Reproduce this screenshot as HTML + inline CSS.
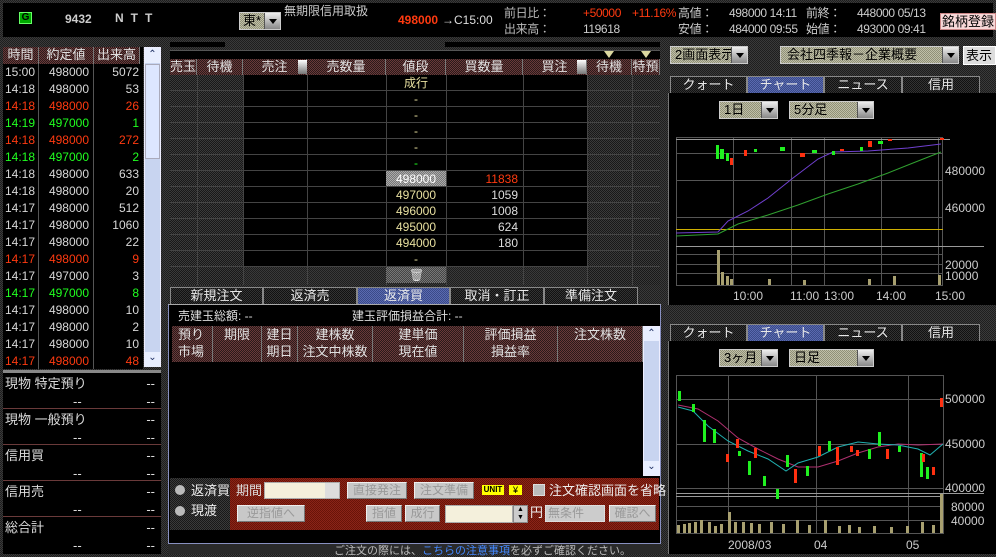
<!DOCTYPE html>
<html><head><meta charset="utf-8"><style>
*{margin:0;padding:0;box-sizing:border-box}
body{width:996px;height:554px;overflow:hidden;background:#2b2b2b;background-image:repeating-conic-gradient(#3a3a3a 0 25%,#1e1e1e 0 50%);background-size:2px 2px;font-family:"Liberation Sans","Noto Sans CJK JP",sans-serif;font-size:12px;color:#d8d8d8;position:relative}
.a{position:absolute}
.blk{position:absolute;background:#000}
.hd{position:absolute;background:#4a2c2c;background-image:repeating-conic-gradient(#6a3a3a 0 25%,#2a1a1a 0 50%);background-size:2px 2px;color:#e0e0e0;text-align:center;font-size:13px;border-right:1px solid #777}
.t{position:absolute;white-space:nowrap;line-height:1}
.r{color:#ff3a10}.g{color:#20ff20}.y{color:#e8e0a0}
.tab{position:absolute;height:17px;border:1px solid #888;border-bottom:none;text-align:center;font-size:13px;line-height:16px;color:#e8e8e8;background:#1a1a1a;background-image:repeating-conic-gradient(#333 0 25%,#111 0 50%);background-size:2px 2px}
.tab.on{background:#4a5a9a;background-image:repeating-conic-gradient(#5a6ab0 0 25%,#3a4a88 0 50%);background-size:2px 2px}
.dd{position:absolute;height:18px;background:#a8a890;background-image:repeating-conic-gradient(#c0c0a8 0 25%,#909078 0 50%);background-size:2px 2px;border:1px solid #ccc;color:#000;font-size:13px;line-height:16px;padding-left:4px}
.dd i{position:absolute;right:0;top:0;width:16px;height:16px;background:linear-gradient(#eee,#888);border-left:1px solid #555}
.dd i:after{content:"";position:absolute;left:4px;top:6px;border:4px solid transparent;border-top:5px solid #000}
.btn{position:absolute;height:17px;background:#c8c8c8;border:1px solid #eee;border-right-color:#777;border-bottom-color:#777;color:#999;font-size:12px;text-align:center;line-height:15px}
.tex{background-image:repeating-conic-gradient(#3a3a3a 0 25%,#181818 0 50%);background-size:2px 2px}
.tp{letter-spacing:-0.4px}
</style></head><body>

<div class="blk" style="left:3px;top:3px;width:990px;height:34px"></div>
<div class="a" style="left:19px;top:12px;width:13px;height:12px;background:#0a0;border:1px solid #6f6;color:#000;font-size:10px;text-align:center;line-height:10px;font-weight:bold">G</div>
<div class="t" style="left:65px;top:13px;font-weight:bold;color:#ccc">9432</div>
<div class="t" style="left:115px;top:12px;font-weight:bold;color:#ccc;letter-spacing:7px">NTT</div>
<div class="dd" style="left:239px;top:12px;width:42px;padding-left:3px">東*<i></i></div>
<div class="t" style="left:284px;top:5px;color:#ccc">無期限信用取扱</div>
<div class="t r" style="left:398px;top:14px;font-weight:bold">498000</div>
<div class="t" style="left:442px;top:14px;color:#ddd">→C15:00</div>
<div class="t tp" style="left:504px;top:7px;color:#bbb">前日比：</div>
<div class="t r tp" style="left:583px;top:7px">+50000</div>
<div class="t r tp" style="left:632px;top:7px">+11.16%</div>
<div class="t tp" style="left:678px;top:7px;color:#ccc">高値：</div>
<div class="t tp" style="left:729px;top:7px;color:#ccc">498000 14:11</div>
<div class="t tp" style="left:806px;top:7px;color:#ccc">前終：</div>
<div class="t tp" style="left:857px;top:7px;color:#ccc">448000 05/13</div>
<div class="t tp" style="left:504px;top:23px;color:#bbb">出来高：</div>
<div class="t tp" style="left:583px;top:23px;color:#ccc">119618</div>
<div class="t tp" style="left:678px;top:23px;color:#ccc">安値：</div>
<div class="t tp" style="left:729px;top:23px;color:#ccc">484000 09:55</div>
<div class="t tp" style="left:806px;top:23px;color:#ccc">始値：</div>
<div class="t tp" style="left:857px;top:23px;color:#ccc">493000 09:41</div>
<div class="a" style="left:940px;top:13px;width:56px;height:17px;background:#f8d8d8;border:1px solid #c88;color:#000;font-size:13px;line-height:15px;text-align:center">銘柄登録</div>

<div class="blk" style="left:3px;top:47px;width:140px;height:322px"></div>
<div class="hd" style="left:3px;top:47px;width:36px;height:17px;line-height:16px">時間</div>
<div class="hd" style="left:39px;top:47px;width:55px;height:17px;line-height:16px">約定値</div>
<div class="hd" style="left:94px;top:47px;width:46px;height:17px;line-height:16px">出来高</div>
<div class="a" style="left:38px;top:64px;width:1px;height:305px;background:#555"></div>
<div class="a" style="left:93px;top:64px;width:1px;height:305px;background:#555"></div>
<div class="a" style="left:144px;top:47px;width:17px;height:320px;background:#c8d4f0;border:1px solid #eef"></div>
<div class="a" style="left:145px;top:48px;width:15px;height:15px;background:#e8eeff;color:#236;font-size:10px;text-align:center;line-height:14px">⌃</div>
<div class="a" style="left:145px;top:64px;width:15px;height:95px;background:#dde6ff;border:1px solid #aab"></div>
<div class="a" style="left:145px;top:352px;width:15px;height:15px;background:#e8eeff;color:#236;font-size:10px;text-align:center;line-height:12px">⌄</div>
<div class="a" style="left:3px;top:64px;width:138px;font-size:12px;line-height:17px">
<div style="position:relative;height:306px">
<pre style="font-family:inherit;position:absolute;left:2px;top:0">15:00
14:18
<span class="r">14:18</span>
<span class="g">14:19</span>
<span class="r">14:18</span>
<span class="g">14:18</span>
14:18
14:18
14:17
14:17
14:17
<span class="r">14:17</span>
14:17
<span class="g">14:17</span>
14:17
14:17
14:17
<span class="r">14:17</span></pre>
<pre style="font-family:inherit;position:absolute;right:52px;top:0;text-align:right">498000
498000
<span class="r">498000</span>
<span class="g">497000</span>
<span class="r">498000</span>
<span class="g">497000</span>
498000
498000
498000
498000
498000
<span class="r">498000</span>
497000
<span class="g">497000</span>
498000
498000
498000
<span class="r">498000</span></pre>
<pre style="font-family:inherit;position:absolute;right:2px;top:0;text-align:right">5072
53
<span class="r">26</span>
<span class="g">1</span>
<span class="r">272</span>
<span class="g">2</span>
633
20
512
1060
22
<span class="r">9</span>
3
<span class="g">8</span>
10
2
10
<span class="r">48</span></pre>
</div></div>

<div class="blk" style="left:3px;top:371px;width:158px;height:183px"></div>
<div class="a" style="left:3px;top:370px;width:158px;height:3px;background:#888"></div>
<div class="a" style="left:3px;top:373px;width:158px;font-size:13px;color:#ddd">
<div style="height:36px;border-bottom:1px solid #6a3a3a;position:relative"><span class="t" style="left:2px;top:4px">現物 特定預り</span><span class="t" style="right:6px;top:4px">--</span><span class="t" style="left:70px;top:22px">--</span><span class="t" style="right:6px;top:22px">--</span></div>
<div style="height:36px;border-bottom:1px solid #6a3a3a;position:relative"><span class="t" style="left:2px;top:4px">現物 一般預り</span><span class="t" style="right:6px;top:4px">--</span><span class="t" style="left:70px;top:22px">--</span><span class="t" style="right:6px;top:22px">--</span></div>
<div style="height:36px;border-bottom:1px solid #6a3a3a;position:relative"><span class="t" style="left:2px;top:4px">信用買</span><span class="t" style="right:6px;top:4px">--</span><span class="t" style="left:70px;top:22px">--</span><span class="t" style="right:6px;top:22px">--</span></div>
<div style="height:36px;border-bottom:1px solid #6a3a3a;position:relative"><span class="t" style="left:2px;top:4px">信用売</span><span class="t" style="right:6px;top:4px">--</span><span class="t" style="left:70px;top:22px">--</span><span class="t" style="right:6px;top:22px">--</span></div>
<div style="height:36px;position:relative"><span class="t" style="left:2px;top:4px">総合計</span><span class="t" style="right:6px;top:4px">--</span><span class="t" style="left:70px;top:22px">--</span><span class="t" style="right:6px;top:22px">--</span></div>
</div>

<div class="blk" style="left:170px;top:42px;width:55px;height:5px"></div>
<div class="blk" style="left:445px;top:42px;width:215px;height:5px"></div>
<div class="blk" style="left:170px;top:50px;width:490px;height:9px;border-top:1px solid #555"></div>
<div class="hd" style="left:170px;top:59px;width:27px;height:16px;line-height:15px">売玉</div>
<div class="hd" style="left:197px;top:59px;width:46px;height:16px;line-height:15px">待機</div>
<div class="hd" style="left:243px;top:59px;width:64px;height:16px;line-height:15px">売注</div>
<div class="a" style="left:298px;top:60px;width:9px;height:14px;background:linear-gradient(#fff,#777)"></div>
<div class="hd" style="left:307px;top:59px;width:79px;height:16px;line-height:15px">売数量</div>
<div class="hd" style="left:386px;top:59px;width:60px;height:16px;line-height:15px">値段</div>
<div class="hd" style="left:446px;top:59px;width:77px;height:16px;line-height:15px">買数量</div>
<div class="hd" style="left:523px;top:59px;width:64px;height:16px;line-height:15px">買注</div>
<div class="a" style="left:577px;top:60px;width:9px;height:14px;background:linear-gradient(#fff,#777)"></div>
<div class="hd" style="left:587px;top:59px;width:45px;height:16px;line-height:15px">待機</div>
<div class="hd" style="left:632px;top:59px;width:28px;height:16px;line-height:15px">特預</div>
<div class="a" style="left:604px;top:51px;border:5px solid transparent;border-top:7px solid #dcd8a0"></div>
<div class="a" style="left:641px;top:51px;border:5px solid transparent;border-top:7px solid #dcd8a0"></div>
<div class="a tex" style="left:170px;top:75px;width:73px;height:210px"></div>
<div class="a tex" style="left:587px;top:75px;width:73px;height:210px"></div>
<div class="blk" style="left:243px;top:75px;width:344px;height:192px"></div>
<svg class="a" style="left:170px;top:75px" width="490" height="210">
<g stroke="#444" stroke-width="1">
<path d="M0 15.5H490M0 31.5H490M0 47.5H490M0 63.5H490M0 79.5H490M0 95.5H490M0 111.5H490M0 127.5H490M0 143.5H490M0 159.5H490M0 175.5H490M0 191.5H490"/>
<path d="M73.5 0V210M137.5 0V210M216.5 0V210M276.5 0V210M353.5 0V210M417.5 0V210M462.5 0V210M27.5 0V210"/>
</g></svg>
<div class="a" style="left:386px;top:171px;width:60px;height:15px;background:#888;background-image:repeating-conic-gradient(#aaa 0 25%,#777 0 50%);background-size:2px 2px"></div>
<div class="a tex" style="left:386px;top:267px;width:60px;height:16px;background-image:repeating-conic-gradient(#777 0 25%,#444 0 50%)"></div>
<div class="t" style="left:409px;top:269px;color:#ddd">🗑</div>
<div class="a y" style="left:386px;top:75px;width:60px;text-align:center;line-height:16px;font-size:12px">成行<br>-<br>-<br>-<br>-<br><span class="g">-</span><br><span style="color:#fff">498000</span><br>497000<br>496000<br>495000<br>494000<br>-</div>
<div class="a" style="left:446px;top:171px;width:72px;text-align:right;line-height:16px;color:#ddd"><span class="r">11838</span><br>1059<br>1008<br>624<br>180</div>

<div class="tab" style="left:170px;top:287px;width:93px">新規注文</div>
<div class="tab" style="left:263px;top:287px;width:94px">返済売</div>
<div class="tab on" style="left:357px;top:287px;width:93px">返済買</div>
<div class="tab" style="left:450px;top:287px;width:94px">取消・訂正</div>
<div class="tab" style="left:544px;top:287px;width:94px">準備注文</div>
<div class="blk" style="left:168px;top:304px;width:493px;height:248px;border:1px solid #8890c0;border-top:1px solid #aaa"></div>
<div class="t" style="left:178px;top:310px;color:#ddd">売建玉総額: --</div>
<div class="t" style="left:352px;top:310px;color:#ddd">建玉評価損益合計: --</div>
<div class="hd" style="left:172px;top:326px;width:41px;height:36px;line-height:17px;text-align:left;padding-left:6px">預り<br>市場</div>
<div class="hd" style="left:213px;top:326px;width:49px;height:36px;line-height:17px">期限</div>
<div class="hd" style="left:262px;top:326px;width:36px;height:36px;line-height:17px">建日<br>期日</div>
<div class="hd" style="left:298px;top:326px;width:75px;height:36px;line-height:17px">建株数<br>注文中株数</div>
<div class="hd" style="left:373px;top:326px;width:91px;height:36px;line-height:17px">建単価<br>現在値</div>
<div class="hd" style="left:464px;top:326px;width:94px;height:36px;line-height:17px">評価損益<br>損益率</div>
<div class="hd" style="left:558px;top:326px;width:85px;height:36px;line-height:17px">注文株数</div>
<div class="a" style="left:643px;top:326px;width:17px;height:150px;background:#c8d4f0;border:1px solid #eef"></div>
<div class="a" style="left:644px;top:327px;width:15px;height:14px;background:#e8eeff;color:#236;font-size:10px;text-align:center;line-height:14px">⌃</div>
<div class="a" style="left:644px;top:461px;width:15px;height:14px;background:#e8eeff;color:#236;font-size:10px;text-align:center;line-height:12px">⌄</div>
<div class="a tex" style="left:170px;top:478px;width:60px;height:52px"></div>
<div class="a" style="left:230px;top:478px;width:429px;height:52px;background:#7a1a10;background-image:repeating-conic-gradient(#8a2418 0 25%,#681408 0 50%);background-size:2px 2px"></div>
<div class="a" style="left:175px;top:485px;width:10px;height:10px;border-radius:50%;background:#bbb"></div>
<div class="a" style="left:175px;top:506px;width:10px;height:10px;border-radius:50%;background:#bbb"></div>
<div class="t" style="left:191px;top:484px;font-size:13px;color:#eee">返済買</div>
<div class="t" style="left:191px;top:504px;font-size:13px;color:#eee">現渡</div>
<div class="t" style="left:236px;top:484px;font-size:13px;color:#ddd">期間</div>
<div class="a" style="left:264px;top:482px;width:76px;height:17px;background:#f4f0dc;border:1px solid #aaa"></div>
<div class="a" style="left:325px;top:483px;width:14px;height:15px;background:#ddd"></div>
<div class="btn" style="left:347px;top:482px;width:60px">直接発注</div>
<div class="btn" style="left:414px;top:482px;width:60px">注文準備</div>
<div class="a" style="left:482px;top:485px;width:22px;height:10px;background:#ff0;color:#000;font-size:8px;font-weight:bold;text-align:center;line-height:10px">UNIT</div>
<div class="a" style="left:509px;top:485px;width:13px;height:10px;background:#ff0;color:#000;font-size:9px;text-align:center;line-height:10px">¥</div>
<div class="a" style="left:533px;top:484px;width:12px;height:12px;background:#bbb;border:1px solid #ddd"></div>
<div class="t" style="left:549px;top:484px;font-size:13px;color:#eee">注文確認画面を省略</div>
<div class="btn" style="left:237px;top:505px;width:68px">逆指値へ</div>
<div class="btn" style="left:366px;top:505px;width:36px">指値</div>
<div class="btn" style="left:405px;top:505px;width:35px">成行</div>
<div class="a" style="left:445px;top:505px;width:68px;height:18px;background:#f4f0dc;border:1px solid #aaa"></div>
<div class="a" style="left:513px;top:505px;width:15px;height:18px;background:#ccc;border:1px solid #888;font-size:7px;color:#000;text-align:center;line-height:8px">▲<br>▼</div>
<div class="t" style="left:530px;top:506px;font-size:13px;color:#eee">円</div>
<div class="a" style="left:545px;top:505px;width:60px;height:17px;background:#ccc;border:1px solid #ddd;color:#999;font-size:12px;padding-left:2px;line-height:15px">無条件</div>
<div class="btn" style="left:609px;top:505px;width:47px">確認へ</div>
<div class="a" style="left:168px;top:543px;width:493px;height:11px;background:#2a2a2a;border-top:1px solid #8890c0"></div>
<div class="t" style="left:334px;top:546px;font-size:11px;color:#bbb">ご注文の際には、<span style="color:#48f">こちらの注意事項</span>を必ずご確認ください。</div>

<div class="dd" style="left:670px;top:46px;width:78px">2画面表示<i></i></div>
<div class="dd" style="left:780px;top:46px;width:179px;padding-left:6px">会社四季報－企業概要<i></i></div>
<div class="a" style="left:963px;top:46px;width:33px;height:19px;background:#ddd;border:1px solid #fff;color:#000;font-size:13px;line-height:17px;padding-left:2px">表示</div>

<div class="tab" style="left:670px;top:76px;width:77px">クォート</div>
<div class="tab on" style="left:747px;top:76px;width:77px">チャート</div>
<div class="tab" style="left:824px;top:76px;width:78px">ニュース</div>
<div class="tab" style="left:902px;top:76px;width:78px">信用</div>
<div class="blk" style="left:668px;top:93px;width:328px;height:212px;border-left:1px solid #777"></div>
<div class="dd" style="left:719px;top:101px;width:59px">1日<i></i></div>
<div class="dd" style="left:789px;top:101px;width:85px">5分足<i></i></div>
<svg class="a" style="left:668px;top:93px" width="328" height="212" font-family="Liberation Sans" font-size="12" fill="#ccc">
<g stroke="#555" fill="none"><rect x="8.5" y="44.5" width="266" height="148"/>
<path d="M8 87.5H275M8 124.5H275M8 161.5H275M8 171.5H275M8 180.5H275M8 60.5H275"/>
<path d="M65.5 44V192M123.5 44V192M156.5 44V192M213.5 44V192M270.5 44V192"/>
<path d="M8 153.5H316" stroke="#999"/></g>
<path d="M8 46.5H282" stroke="#999"/>
<path d="M8 136.5H275" stroke="#d0b000"/>
<path d="M8 140 L50 139 L60 128 L80 118 L100 105 L125 85 L150 66 L165 59 L200 58 L240 55 L273 51" stroke="#7040d0" fill="none"/>
<path d="M8 143 L50 141 L70 131 L100 122 L130 112 L160 101 L190 91 L220 80 L245 70 L273 59" stroke="#30a030" fill="none"/>
<g fill="#20f020"><rect x="48" y="52" width="3" height="14"/><rect x="52" y="56" width="4" height="10"/><rect x="58" y="60" width="3" height="8"/><rect x="86" y="56" width="3" height="3"/><rect x="112" y="54" width="5" height="4"/><rect x="144" y="57" width="5" height="3"/><rect x="164" y="58" width="3" height="4"/><rect x="192" y="54" width="3" height="4"/><rect x="210" y="48" width="5" height="3"/></g>
<g fill="#ff3010"><rect x="62" y="65" width="3" height="7"/><rect x="76" y="57" width="3" height="6"/><rect x="132" y="60" width="5" height="4"/><rect x="172" y="56" width="4" height="2"/><rect x="200" y="48" width="4" height="6"/><rect x="220" y="46" width="4" height="2"/><rect x="272" y="45" width="4" height="2"/></g>
<g fill="#a8a070"><rect x="49" y="157" width="3" height="35"/><rect x="53" y="179" width="3" height="13"/><rect x="58" y="183" width="3" height="9"/><rect x="62" y="186" width="3" height="6"/><rect x="100" y="186" width="3" height="6"/><rect x="135" y="187" width="3" height="5"/><rect x="200" y="186" width="3" height="6"/><rect x="225" y="183" width="3" height="9"/><rect x="270" y="182" width="3" height="10"/></g>
<text x="277" y="82">480000</text><text x="277" y="119">460000</text><text x="277" y="176">20000</text><text x="277" y="187">10000</text>
<text x="65" y="207">10:00</text><text x="122" y="207">11:00</text><text x="156" y="207">13:00</text><text x="208" y="207">14:00</text><text x="267" y="207">15:00</text>
</svg>

<div class="tab" style="left:670px;top:324px;width:77px">クォート</div>
<div class="tab on" style="left:747px;top:324px;width:77px">チャート</div>
<div class="tab" style="left:824px;top:324px;width:78px">ニュース</div>
<div class="tab" style="left:902px;top:324px;width:78px">信用</div>
<div class="blk" style="left:668px;top:341px;width:328px;height:213px;border-left:1px solid #777"></div>
<div class="dd" style="left:719px;top:349px;width:59px">3ヶ月<i></i></div>
<div class="dd" style="left:789px;top:349px;width:85px">日足<i></i></div>
<svg class="a" style="left:668px;top:341px" width="328" height="213" font-family="Liberation Sans" font-size="12" fill="#ccc">
<g stroke="#555" fill="none"><rect x="8.5" y="34.5" width="267" height="158"/>
<path d="M8 58.5H275M8 103.5H275M8 147.5H275M8 165.5H275M8 179.5H275"/>
<path d="M60.5 34V192M148.5 34V192M240.5 34V192"/>
<path d="M8 152.5H316M8 155.5H275" stroke="#999"/></g>
<path d="M10 64 L30 68 L50 80 L70 97 L90 108 L110 118 L130 126 L150 126 L170 120 L190 112 L210 106 L230 103 L250 104 L275 103" stroke="#b03070" fill="none"/>
<path d="M10 66 L25 70 L40 85 L60 100 L80 110 L100 118 L118 130 L130 122 L150 116 L170 106 L190 101 L210 103 L230 104 L250 108 L262 114 L275 103" stroke="#20b0b0" fill="none"/>
<g fill="#20f020"><rect x="10" y="50" width="3" height="10"/><rect x="24" y="63" width="3" height="8"/><rect x="35" y="79" width="3" height="22"/><rect x="45" y="88" width="3" height="14"/><rect x="70" y="110" width="3" height="5"/><rect x="80" y="120" width="3" height="14"/><rect x="95" y="135" width="3" height="10"/><rect x="108" y="148" width="3" height="10"/><rect x="118" y="114" width="3" height="12"/><rect x="138" y="125" width="3" height="10"/><rect x="160" y="100" width="3" height="10"/><rect x="200" y="108" width="3" height="10"/><rect x="210" y="91" width="3" height="14"/><rect x="230" y="105" width="3" height="6"/><rect x="252" y="112" width="3" height="24"/><rect x="258" y="126" width="3" height="12"/></g>
<g fill="#ff3010"><rect x="58" y="113" width="3" height="8"/><rect x="68" y="98" width="3" height="9"/><rect x="86" y="107" width="3" height="10"/><rect x="126" y="128" width="3" height="14"/><rect x="150" y="105" width="3" height="10"/><rect x="168" y="106" width="3" height="18"/><rect x="182" y="105" width="3" height="6"/><rect x="188" y="109" width="3" height="6"/><rect x="218" y="108" width="3" height="10"/><rect x="254" y="113" width="3" height="8"/><rect x="264" y="126" width="3" height="8"/><rect x="272" y="57" width="3" height="9"/></g>
<g fill="#a8a070" transform="translate(0,21)"><rect x="9" y="163" width="3" height="8"/><rect x="15" y="162" width="3" height="9"/><rect x="20" y="161" width="3" height="10"/><rect x="26" y="160" width="3" height="11"/><rect x="32" y="158" width="3" height="13"/><rect x="40" y="160" width="3" height="11"/><rect x="46" y="164" width="3" height="7"/><rect x="52" y="162" width="3" height="9"/><rect x="60" y="150" width="3" height="21"/><rect x="66" y="160" width="3" height="11"/><rect x="74" y="160" width="3" height="11"/><rect x="82" y="161" width="3" height="10"/><rect x="90" y="162" width="3" height="9"/><rect x="102" y="160" width="3" height="11"/><rect x="114" y="162" width="3" height="9"/><rect x="128" y="158" width="3" height="13"/><rect x="140" y="163" width="3" height="8"/><rect x="156" y="158" width="3" height="13"/><rect x="170" y="164" width="3" height="7"/><rect x="180" y="163" width="3" height="8"/><rect x="190" y="165" width="3" height="6"/><rect x="205" y="164" width="3" height="7"/><rect x="222" y="165" width="3" height="6"/><rect x="238" y="164" width="3" height="7"/><rect x="253" y="160" width="3" height="11"/><rect x="264" y="163" width="3" height="8"/><rect x="272" y="132" width="3" height="39"/></g>
<text x="277" y="62">500000</text><text x="277" y="107">450000</text><text x="277" y="151">400000</text><text x="283" y="170">80000</text><text x="283" y="184">40000</text>
<text x="60" y="208">2008/03</text><text x="146" y="208">04</text><text x="238" y="208">05</text>
</svg>
</body></html>
